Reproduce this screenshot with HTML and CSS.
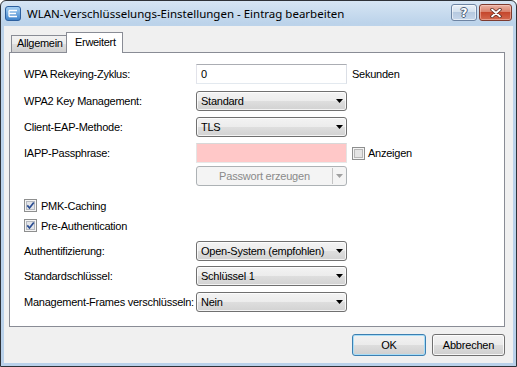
FILE: index.html
```html
<!DOCTYPE html>
<html lang="de">
<head>
<meta charset="utf-8">
<title>WLAN-Verschlüsselungs-Einstellungen</title>
<link rel="stylesheet" href="styles.css">
</head>
<body>
<div class="window">
  <div class="titlebar">
    <svg class="appicon" width="16" height="15" viewBox="0 0 16 15">
      <defs>
        <linearGradient id="ig" x1="0" y1="0" x2="0" y2="1">
          <stop offset="0" stop-color="#a9d3f5"/>
          <stop offset="1" stop-color="#3b7fc8"/>
        </linearGradient>
      </defs>
      <rect x="0.5" y="0.5" width="15" height="14" rx="2.5" fill="url(#ig)" stroke="#2c5f9e"/>
      <path d="M4 4.5h8M4 4.5v6M4 7.5h7M4 10.5h8" stroke="#fff" stroke-width="1.3" fill="none"/>
    </svg>
    <span class="title">WLAN-Verschlüsselungs-Einstellungen - Eintrag bearbeiten</span>
    <div class="caption-btns">
      <div class="cbtn help"><span class="qmark">?</span></div>
      <div class="cbtn close">
        <svg width="12" height="10" viewBox="0 0 12 10">
          <path d="M2 1.5l8 7M10 1.5l-8 7" stroke="#5a2a22" stroke-width="3.4" stroke-linecap="round"/>
          <path d="M2 1.5l8 7M10 1.5l-8 7" stroke="#fff" stroke-width="1.8" stroke-linecap="round"/>
        </svg>
      </div>
    </div>
  </div>
  <div class="client">
    <div class="tabs">
      <div class="tab">Allgemein</div>
      <div class="tab active">Erweitert</div>
    </div>
    <div class="panel">
      <div class="row r1">
        <span class="label">WPA Rekeying-Zyklus:</span>
        <div class="textbox">0</div>
        <span class="unit">Sekunden</span>
      </div>
      <div class="row r2">
        <span class="label">WPA2 Key Management:</span>
        <div class="combo"><span class="ctext">Standard</span><svg class="arrow" width="7" height="4" viewBox="0 0 7 4"><path d="M0 0h7L3.5 4z" fill="#000"/></svg></div>
      </div>
      <div class="row r3">
        <span class="label">Client-EAP-Methode:</span>
        <div class="combo"><span class="ctext">TLS</span><svg class="arrow" width="7" height="4" viewBox="0 0 7 4"><path d="M0 0h7L3.5 4z" fill="#000"/></svg></div>
      </div>
      <div class="row r4">
        <span class="label">IAPP-Passphrase:</span>
        <div class="textbox pink"></div>
        <svg class="cb cb-side" width="13" height="13" viewBox="0 0 13 13">
          <rect x="0.5" y="0.5" width="12" height="12" fill="#f4f4f4" stroke="#8e8f8f"/>
          <rect x="2.5" y="2.5" width="8" height="8" fill="#e4e4e4" stroke="#b8b8b8"/>
        </svg>
        <span class="cblabel">Anzeigen</span>
      </div>
      <div class="row r5">
        <span class="label"></span>
        <div class="splitbtn">
          <span class="smain">Passwort erzeugen</span>
          <span class="ssep"></span>
          <svg class="sarrow" width="7" height="4" viewBox="0 0 7 4"><path d="M0 0h7L3.5 4z" fill="#a0a0a0"/></svg>
        </div>
      </div>
      <div class="row cbrow c1">
        <svg class="cb" width="13" height="13" viewBox="0 0 13 13">
          <rect x="0.5" y="0.5" width="12" height="12" fill="#f4f4f4" stroke="#8e8f8f"/>
          <rect x="2.5" y="2.5" width="8" height="8" fill="#e2e4e8" stroke="#b4b8bf"/>
          <path d="M3.3 6.4l2.2 2.6 4.3-5.6" stroke="#2a4d92" stroke-width="1.7" fill="none"/>
        </svg>
        <span class="cblabel">PMK-Caching</span>
      </div>
      <div class="row cbrow c2">
        <svg class="cb" width="13" height="13" viewBox="0 0 13 13">
          <rect x="0.5" y="0.5" width="12" height="12" fill="#f4f4f4" stroke="#8e8f8f"/>
          <rect x="2.5" y="2.5" width="8" height="8" fill="#e2e4e8" stroke="#b4b8bf"/>
          <path d="M3.3 6.4l2.2 2.6 4.3-5.6" stroke="#2a4d92" stroke-width="1.7" fill="none"/>
        </svg>
        <span class="cblabel">Pre-Authentication</span>
      </div>
      <div class="row r6">
        <span class="label">Authentifizierung:</span>
        <div class="combo"><span class="ctext">Open-System (empfohlen)</span><svg class="arrow" width="7" height="4" viewBox="0 0 7 4"><path d="M0 0h7L3.5 4z" fill="#000"/></svg></div>
      </div>
      <div class="row r7">
        <span class="label">Standardschlüssel:</span>
        <div class="combo"><span class="ctext">Schlüssel 1</span><svg class="arrow" width="7" height="4" viewBox="0 0 7 4"><path d="M0 0h7L3.5 4z" fill="#000"/></svg></div>
      </div>
      <div class="row r8">
        <span class="label">Management-Frames verschlüsseln:</span>
        <div class="combo"><span class="ctext">Nein</span><svg class="arrow" width="7" height="4" viewBox="0 0 7 4"><path d="M0 0h7L3.5 4z" fill="#000"/></svg></div>
      </div>
    </div>
    <div class="footer">
      <div class="btn default ok">OK</div>
      <div class="btn cancel">Abbrechen</div>
    </div>
  </div>
</div>
</body>
</html>
```

FILE: styles.css
```css
html, body {
  margin: 0;
  padding: 0;
  background: #ffffff;
}

body {
  font-family: "Liberation Sans", Arial, sans-serif;
  font-size: 11px;
  color: #000;
}

.window {
  width: 517px;
  height: 367px;
  box-sizing: border-box;
  border: 1px solid #2e3238;
  border-radius: 6px 6px 0 0;
  background: linear-gradient(#d6e5f4 0px, #bcd3ea 22px, #b9d1ea 100%);
  display: flex;
  flex-direction: column;
  overflow: hidden;
}

.titlebar {
  height: 25px;
  flex: none;
  display: flex;
  align-items: center;
  padding-left: 4px;
}

.appicon {
  flex: none;
  margin-right: 6px;
  margin-top: -1px;
}

.title {
  font-family: "Noto Sans", "Open Sans", sans-serif;
  font-size: 11.5px;
  color: #000;
  white-space: nowrap;
  margin-top: -1px;
}

.caption-btns {
  margin-left: auto;
  margin-right: 4px;
  align-self: flex-start;
  margin-top: 3px;
  display: flex;
  gap: 2px;
}

.cbtn {
  height: 17px;
  box-sizing: border-box;
  border-radius: 3px;
  display: flex;
  align-items: center;
  justify-content: center;
}

.help {
  width: 26px;
  border: 1px solid #6d84a3;
  background: linear-gradient(#e9f0f8 0%, #d3e0ee 45%, #b6c9e0 50%, #c6d6ea 100%);
  box-shadow: inset 0 0 0 1px rgba(255,255,255,0.55);
}

.qmark {
  font-family: "DejaVu Sans", sans-serif;
  font-weight: bold;
  font-size: 12px;
  color: #fff;
  text-shadow: -1px 0 #4c5d77, 1px 0 #4c5d77, 0 -1px #4c5d77, 0 1px #4c5d77;
  line-height: 1;
}

.close {
  width: 33px;
  border: 1px solid #7d3a2e;
  background: linear-gradient(#eab2a4 0%, #d9826d 45%, #c5472d 50%, #d4694f 100%);
  box-shadow: inset 0 0 0 1px rgba(255,220,210,0.45);
}

.client {
  flex: 1;
  margin: 0 3px 3px 3px;
  background: #f0f0f0;
  padding: 6px 8px 0 5px;
  display: flex;
  flex-direction: column;
}

.tabs {
  height: 20px;
  display: flex;
  align-items: flex-end;
  padding-left: 2px;
  position: relative;
  z-index: 1;
}

.tab {
  box-sizing: border-box;
  border: 1px solid #898c95;
  border-bottom: none;
  height: 17px;
  width: 56px;
  padding-left: 5px;
  line-height: 15px;
  letter-spacing: -0.3px;
  background: linear-gradient(#f2f2f2 0%, #ebebeb 50%, #dddddd 51%, #cfcfcf 100%);
}

.tab.active {
  height: 21px;
  width: 57px;
  margin-left: -1px;
  margin-bottom: -1px;
  background: #ffffff;
  padding-left: 8px;
  line-height: 18px;
}

.panel {
  box-sizing: border-box;
  height: 275px;
  border: 1px solid #898c95;
  background: #ffffff;
  padding: 11px 14px 0 14px;
  display: flex;
  flex-direction: column;
}

.row {
  display: flex;
  align-items: center;
  height: 20px;
  flex: none;
}

.r2 { margin-top: 7px; }
.r3 { margin-top: 6px; }
.r4 { margin-top: 6px; }
.r5 { margin-top: 3px; }
.c1 { margin-top: 12px; height: 15px; }
.c2 { margin-top: 5px; height: 15px; }
.r6 { margin-top: 8px; }
.r7 { margin-top: 5px; }
.r8 { margin-top: 6px; }

.label {
  width: 172px;
  flex: none;
  white-space: nowrap;
  letter-spacing: -0.25px;
}

.textbox {
  width: 151px;
  height: 20px;
  box-sizing: border-box;
  border: 1px solid;
  border-color: #abadb3 #dbdfe6 #e3e9ef #e2e3ea;
  background: #ffffff;
  padding-left: 4px;
  line-height: 18px;
  flex: none;
}

.textbox.pink {
  background: #ffc8c8;
  border-color: #d8d8d8 #e4e4e4 #e8e8e8 #e4e4e4;
}

.unit {
  margin-left: 5px;
  letter-spacing: -0.25px;
}

.combo {
  width: 151px;
  height: 20px;
  box-sizing: border-box;
  flex: none;
  border: 1px solid #707070;
  border-radius: 3px;
  background: linear-gradient(#f3f3f3 0%, #ececec 50%, #dedede 51%, #d2d2d2 100%);
  box-shadow: inset 0 0 0 1px rgba(255,255,255,0.75);
  display: flex;
  align-items: center;
  padding: 0 3px 0 4px;
}

.ctext {
  flex: 1;
  white-space: nowrap;
  letter-spacing: -0.25px;
}

.arrow {
  flex: none;
}

.cb {
  flex: none;
}

.cb-side {
  margin-left: 5px;
}

.cblabel {
  margin-left: 3px;
  letter-spacing: -0.25px;
}

.cbrow .cblabel {
  margin-left: 4px;
}

.splitbtn {
  width: 151px;
  height: 20px;
  box-sizing: border-box;
  flex: none;
  border: 1px solid #adb2b5;
  border-radius: 3px;
  background: #f4f4f4;
  color: #8a8a8a;
  display: flex;
  align-items: center;
}

.smain {
  flex: 1;
  text-align: center;
  letter-spacing: -0.2px;
}

.ssep {
  width: 1px;
  height: 16px;
  background: #c4c4c4;
  flex: none;
}

.sarrow {
  flex: none;
  margin: 0 3px 0 3px;
}

.footer {
  display: flex;
  justify-content: flex-end;
  gap: 6px;
  margin-top: 7px;
}

.btn {
  height: 22px;
  box-sizing: border-box;
  border: 1px solid #707070;
  border-radius: 3px;
  background: linear-gradient(#f2f2f2 0%, #ebebeb 50%, #dddddd 51%, #cfcfcf 100%);
  box-shadow: inset 0 0 0 1px rgba(255,255,255,0.8);
  display: flex;
  align-items: center;
  justify-content: center;
  letter-spacing: -0.2px;
}

.btn.ok {
  width: 74px;
}

.btn.cancel {
  width: 73px;
}

.btn.default {
  border-color: #3c7fb1;
  box-shadow: inset 0 0 0 1px #a8ddf7;
}
```
